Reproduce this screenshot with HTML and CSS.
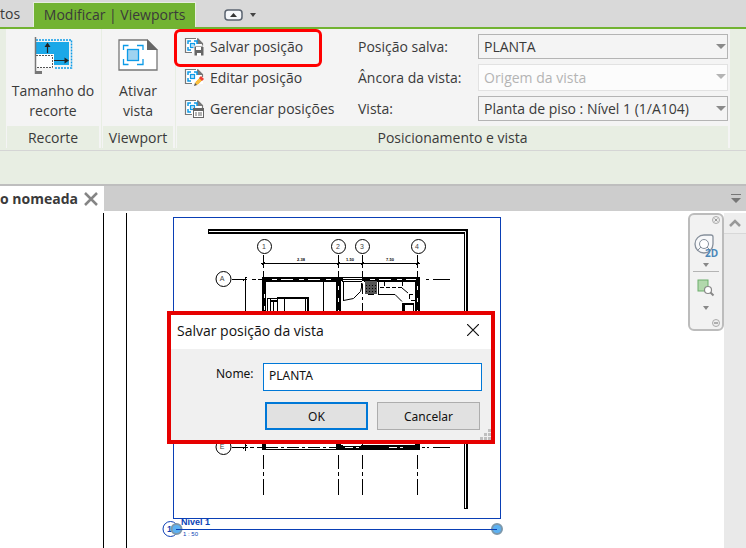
FILE: index.html
```html
<!DOCTYPE html>
<html lang="pt-BR">
<head>
    <meta charset="UTF-8">
    <meta name="viewport" content="width=device-width, initial-scale=1.0">
    <title>Modificar | Viewports</title>
    <link rel="stylesheet" href="styles.css">
</head>
<body>

<svg width="0" height="0" class="defs">
    <symbol id="view-page" viewBox="0 0 20 20">
        <path d="M1 1h13l5 5v10H1z" fill="#fff"/>
        <path d="M12 1.500H1.500v14H8M13.500 1.500L18.500 6.500V9" fill="none" stroke="#777" stroke-width="1.200"/>
        <path d="M13 1l6 6h-6z" fill="#777"/>
        <path d="M4 7V4h3M10 4h3v3M4 10v3h3" fill="none" stroke="#0d9be8" stroke-width="1.500"/>
        <rect x="6.500" y="6.500" width="4" height="4" fill="#bfe3f7" stroke="#0d9be8" stroke-width="1.200"/>
    </symbol>
</svg>

<header>
    <nav class="ribbon-tabs">
        <a href="#" class="tab">tos</a>
        <a href="#" class="tab active">Modificar | Viewports</a>
        <button class="collapse" aria-label="Minimizar">
            <svg width="32" height="12" viewBox="0 0 32 12">
                <rect x="1" y="1" width="17" height="10" rx="3" fill="#f5f7fa" stroke="#5b6470" stroke-width="1.500"/>
                <path d="M6 8l3.500-4 3.500 4z" fill="#333"/>
                <path d="M26 4h6l-3 4z" fill="#444"/>
            </svg>
        </button>
    </nav>
</header>

<section class="ribbon">
    <div class="panel crop">
        <button class="big">
            <svg width="40" height="40" viewBox="0 0 40 40">
                <rect x="3" y="5" width="33" height="23" fill="#1ba8e8"/>
                <path d="M3 3h35.500v28H21" fill="none" stroke="#0d9be8" stroke-width="1.500" stroke-dasharray="2 1"/>
                <path d="M3 17h18v14H3z" fill="#fff"/>
                <path d="M3 18.500h16.500v12H3" fill="none" stroke="#555" stroke-dasharray="2 1"/>
                <path d="M2.500 0v37" stroke="#777" stroke-width="1.500"/>
                <path d="M2 34h7v3H2z" fill="#777"/>
                <path d="M14.500 16V8M21 23.500h12" stroke="#222" stroke-width="1.200"/>
                <path d="M11.500 10l3-4.500 3 4.500zM31.500 20.500l4.500 3-4.500 3z" fill="#222"/>
            </svg>
            <span>Tamanho do<br>recorte</span>
        </button>
        <h2>Recorte</h2>
    </div>

    <div class="panel view">
        <button class="big">
            <svg width="40" height="40" viewBox="0 0 40 40">
                <path d="M1 3h28l10 10v20H1z" fill="#fff" stroke="#777" stroke-width="1.300"/>
                <path d="M29 2v11h11z" fill="#666"/>
                <path d="M5.500 13V8.500h5M19 8.500h6V13M5.500 22v5.500h5M19 27.500h6V22" fill="none" stroke="#0d9be8" stroke-width="1.300"/>
                <rect x="9.500" y="12.500" width="11" height="11" fill="#9fd3f0" stroke="#0d9be8" stroke-width="1.300"/>
            </svg>
            <span>Ativar<br>vista</span>
        </button>
        <h2>Viewport</h2>
    </div>

    <div class="panel position">
        <div class="position-body">
            <div class="commands">
                <button class="command marked">
                    <svg width="20" height="20" viewBox="0 0 20 20">
                        <use href="#view-page"/>
                        <path d="M10 9h9l1 1v9H10z" fill="#666" stroke="#f4f4f4" stroke-width="1"/>
                        <path d="M12 10h5v3h-5zM13 16h4v3h-4z" fill="#fff"/>
                    </svg>
                    Salvar posição
                </button>
                <button class="command">
                    <svg width="20" height="20" viewBox="0 0 20 20">
                        <use href="#view-page"/>
                        <path d="M10 18l1-4 5-5 3 3-5 5z" fill="#fbbf3c" stroke="#f4f4f4" stroke-width="1"/>
                        <path d="M15 10l2-2 3 3-2 2z" fill="#ee4035"/>
                        <path d="M10 18l1-3 2 2z" fill="#555"/>
                    </svg>
                    Editar posição
                </button>
                <button class="command">
                    <svg width="20" height="20" viewBox="0 0 20 20">
                        <use href="#view-page"/>
                        <rect x="9" y="9" width="11" height="10" fill="#666"/>
                        <path d="M10 12h9v6h-9z" fill="#fff"/>
                        <path d="M11 14h2M14 14h4M11 16h2M14 16h4" stroke="#666"/>
                    </svg>
                    Gerenciar posições
                </button>
            </div>
            <div class="fields">
                <label for="saved">Posição salva:</label>
                <div class="combo"><select id="saved"><option>PLANTA</option></select></div>
                <label for="anchor">Âncora da vista:</label>
                <div class="combo off"><select id="anchor" disabled><option>Origem da vista</option></select></div>
                <label for="sheet-view">Vista:</label>
                <div class="combo"><select id="sheet-view"><option>Planta de piso : Nível 1 (1/A104)</option></select></div>
            </div>
        </div>
        <h2>Posicionamento e vista</h2>
    </div>
</section>

<div class="options-bar"></div>

<div class="view-tabs">
    <div class="view-tab">
        <a href="#">o nomeada</a>
        <button aria-label="Fechar vista">
            <svg width="14" height="14" viewBox="0 0 14 14"><path d="M1 1l12 12M13 1L1 13" stroke="#858585" stroke-width="2.500"/></svg>
        </button>
    </div>
    <button class="tab-list" aria-label="Lista de vistas">
        <svg width="10" height="9" viewBox="0 0 10 9"><path d="M0 0h10v1H0zM0 4h10L5 9z" fill="#777"/></svg>
    </button>
</div>

<main>
    <div class="canvas">
        <svg class="drawing" width="688" height="337" viewBox="0 211 688 337">
            <!-- sheet border -->
            <path d="M103.500 213V2000M126.500 213V2000" stroke="#000"/>

            <!-- viewport frame and title -->
            <rect x="173.500" y="217.500" width="327" height="301" class="blue"/>
            <circle cx="170.500" cy="529" r="7.500" class="blue"/>
            <text x="167" y="532" class="title">1</text>
            <circle cx="176.500" cy="529" r="5" class="grip-dot"/>
            <circle cx="497" cy="529" r="5" class="grip-dot"/>
            <path d="M176 529.500h321" class="blue"/>
            <text x="181" y="525" class="title">Nível 1</text>
            <text x="183" y="536" class="scale">1 : 50</text>

            <!-- outer wall -->
            <path d="M208 229h260v280h-4V234H208z" fill="#000"/>
            <path d="M209 231.500h256.500V508" fill="none" stroke="#fff"/>

            <!-- grid bubbles -->
            <g class="bubble">
                <circle cx="264.500" cy="246.500" r="7"/>
                <circle cx="338.500" cy="246.500" r="7"/>
                <circle cx="362.500" cy="246.500" r="7"/>
                <circle cx="418.500" cy="246.500" r="7"/>
                <circle cx="223.500" cy="279" r="7.500"/>
                <circle cx="223.500" cy="447" r="7.500"/>
            </g>
            <g class="mark">
                <text x="264" y="249">1</text>
                <text x="338" y="249">2</text>
                <text x="362" y="249">3</text>
                <text x="417" y="249">4</text>
                <text x="222" y="281">A</text>
                <text x="222" y="449">E</text>
            </g>

            <!-- grid lines and dimensions -->
            <g class="thin" shape-rendering="crispEdges">
                <path d="M263.500 255v13M338.500 255v13M362.500 255v13M417.500 255v13M263.500 271v6M338.500 271v6M362.500 271v6M417.500 271v6"/>
                <path d="M261 263.500h159M262 265l3-3M337 265l3-3M361 265l3-3M416 265l3-3"/>
                <path d="M232 279.500h15M252 279.500h4M258 279.500h4M426 279.500h3M433 279.500h17"/>
                <path d="M245.500 277v174M243 281l4-4M243 449l4-4"/>
                <path d="M232 447.500h16M250 447.500h4M257 447.500h5M422 447.500h3M427 447.500h2M433 447.500h17"/>
                <path d="M263.500 455v14M338.500 455v14M362.500 455v14M417.500 455v14"/>
                <path d="M263.500 472v4M338.500 472v4M362.500 472v4M417.500 472v4"/>
                <path d="M263.500 479v16M338.500 479v16M362.500 479v16M417.500 479v16"/>
                <path d="M362.500 284v166" stroke-dasharray="10 3 3 3"/>
            </g>
            <g class="dim">
                <text x="301" y="261">2.38</text>
                <text x="350" y="261">1.50</text>
                <text x="390" y="261">7.50</text>
            </g>

            <!-- rooms -->
            <g shape-rendering="crispEdges">
                <path d="M262 277h158v173h-5V282h-51v-1h-23v169h-5V282h-70v168h-4z" fill="#000"/>
                <path d="M343 278h19v4h-19z" fill="#fff"/>
                <path d="M342 279.500h20M342 281.500h20M323.500 282v60M343.500 282v19M361.500 283v5" class="thin"/>
                <path d="M272 279.500h62M370 279.500h46" stroke="#fff" stroke-dasharray="5 4 12 6"/>
                <path d="M338.500 286v150M417.500 286v150M264.500 294v150" stroke="#fff" stroke-dasharray="4 8"/>
                <path d="M277 297h32v18h-2v-16h-30z" fill="#000"/>
                <path d="M267.500 298.500h10M267.500 298v20M270.500 299v16M273.500 301v14M277.500 298v17M284.500 299v16M305.500 299v16" class="thin"/>
                <path d="M271 300h6v2h-6z" fill="#000"/>
                <rect x="365" y="281" width="12" height="13" fill="#555"/>
                <path d="M366 285.500h10M366 288.500h10M366 291.500h10" stroke="#000" stroke-dasharray="1 2"/>
                <path d="M368 294.500h6M378.500 282v12M402 303h11v12M404.500 303v12" class="thin"/>
                <path d="M402 303h11v2h-11zM402 303h2v12h-2z" fill="#000"/>
                <path d="M384.500 282v5M380 287.500h22M402.500 282v6M409.500 295v5h6M409 294.500h6" class="thin" stroke-dasharray="4 2"/>
            </g>
            <path d="M343.500 300.500l10-2 7-7 2-8M378 294.500h17l7 7M402 288l6 5" class="thin"/>

            <!-- bottom wall -->
            <g shape-rendering="crispEdges">
                <path d="M262 445h158v5H262z" fill="#000"/>
                <path d="M266 445h70v4h-70zM343 445h18v1h-18z" fill="#fff"/>
                <path d="M266 447.500h70" class="thin" stroke-dasharray="12 3 3 3"/>
                <path d="M345 447.500h70" stroke="#fff" stroke-dasharray="8 3 3 30"/>
            </g>
        </svg>

        <form class="dialog">
            <div class="dialog-title">
                <h1>Salvar posição da vista</h1>
                <button type="button" aria-label="Fechar">
                    <svg width="12" height="12" viewBox="0 0 12 12"><path d="M0 0l12 12M12 0L0 12" stroke="#111" stroke-width="1.200"/></svg>
                </button>
            </div>
            <div class="dialog-body">
                <div class="name-row">
                    <label for="name">Nome:</label>
                    <input type="text" id="name" value="PLANTA">
                </div>
                <div class="actions">
                    <button type="button" class="default">OK</button>
                    <button type="button">Cancelar</button>
                </div>
                <svg class="grip" width="11" height="11" viewBox="0 0 11 11">
                    <path d="M8 0h3v3H8zM4 4h3v3H4zM8 4h3v3H8zM0 8h3v3H0zM4 8h3v3H4zM8 8h3v3H8z" fill="#bfbfbf"/>
                </svg>
            </div>
        </form>
    </div>

    <aside class="navbar">
        <button aria-label="Fechar barra">
            <svg width="8" height="8" viewBox="0 0 8 8"><circle cx="4" cy="4" r="3.500" fill="#eee" stroke="#aaa"/><path d="M2.500 2.500l3 3M5.500 2.500l-3 3" stroke="#999"/></svg>
        </button>
        <button class="wheel" aria-label="Roda de navegação 2D">
            <svg width="26" height="26" viewBox="0 0 26 26">
                <path d="M11 2h7q2 0 2 2v7a9 9 0 1 1-9-9z" fill="#f7f8fa" stroke="#87909c" stroke-width="1.300"/>
                <circle cx="11" cy="11" r="4.500" fill="#fff" stroke="#87909c"/>
                <path d="M4 18l4-4M14 14l3 3" stroke="#87909c"/>
                <text x="12" y="24">2D</text>
            </svg>
        </button>
        <button aria-label="Opções da roda"><svg width="6" height="4" viewBox="0 0 6 4"><path d="M0 0h6L3 4z" fill="#888"/></svg></button>
        <hr>
        <button class="zoom" aria-label="Zoom na região">
            <svg width="18" height="18" viewBox="0 0 18 18">
                <rect x="1" y="1" width="10" height="11" fill="#b2d8ac" stroke="#6cae6c"/>
                <circle cx="11" cy="11" r="3.500" fill="#fff" stroke="#888" stroke-width="1.200"/>
                <path d="M13.500 13.500l3 3" stroke="#888" stroke-width="2"/>
            </svg>
        </button>
        <button aria-label="Opções de zoom"><svg width="6" height="4" viewBox="0 0 6 4"><path d="M0 0h6L3 4z" fill="#888"/></svg></button>
        <button class="more" aria-label="Personalizar">
            <svg width="8" height="8" viewBox="0 0 8 8"><circle cx="4" cy="4" r="3.500" fill="#eee" stroke="#aaa"/><path d="M2 4h4" stroke="#999" stroke-width="1.500"/></svg>
        </button>
    </aside>

    <div class="scrollbar">
        <button aria-label="Rolar para cima">
            <svg width="12" height="8" viewBox="0 0 12 8"><path d="M1 7l5-5 5 5" fill="none" stroke="#999" stroke-width="2.500"/></svg>
        </button>
    </div>
</main>

</body>
</html>
```
FILE: styles.css
```css
/* Global Styles */
*, *::before, *::after {
    box-sizing: border-box;
    margin: 0;
    padding: 0;
}
body {
    display: flex;
    flex-direction: column;
    min-height: 100vh;
    background-color: #fff;
    color: #3a3a3a;
    font-family: 'Open Sans', 'Noto Sans', sans-serif;
    font-size: 14px;
    overflow: hidden;
}
a {
    color: inherit;
    text-decoration: none;
}
button {
    border: none;
    background: none;
    color: inherit;
    font: inherit;
}
svg {
    display: block;
    flex: none;
}
.defs {
    position: absolute;
}

/* Ribbon tabs */
.ribbon-tabs {
    display: flex;
    align-items: flex-end;
    height: 29px;
    background-color: #d9d9d9;
    border-bottom: 2px solid #72b332;
}
.tab {
    height: 25px;
    line-height: 24px;
}
.tab.active {
    width: 163px;
    margin-left: 13px;
    border: 1px solid #e6eedf;
    border-bottom: none;
    background-color: #72b332;
    text-align: center;
}
.collapse {
    margin-left: 28px;
    padding-bottom: 6px;
}

/* Ribbon */
.ribbon {
    display: flex;
    height: 121px;
    padding: 0 16px 2px 6px;
    background-color: #e8eee3;
}
.panel {
    display: flex;
    flex-direction: column;
    padding: 0 2px 0 1px;
    background-color: #f4f4f4;
    border-right: 1px solid #e8eee3;
}
.crop {
    width: 96px;
}
.view {
    width: 74px;
}
.position {
    flex: 1;
    border-right: none;
}
.panel h2 {
    height: 22px;
    margin-top: auto;
    background-color: #e8eee3;
    font-size: 14px;
    font-weight: 400;
    line-height: 24px;
    text-align: center;
}
.big {
    display: flex;
    flex-direction: column;
    align-items: center;
    gap: 4px;
    padding-top: 8px;
    line-height: 20px;
    white-space: nowrap;
}
.position-body {
    display: flex;
    padding: 2px 0;
}
.commands {
    width: 181px;
    padding-left: 7px;
}
.command {
    display: flex;
    align-items: center;
    gap: 6px;
    height: 31px;
    white-space: nowrap;
}
.marked {
    position: relative;
}
.marked::after {
    content: "";
    position: absolute;
    top: -2px;
    left: -10px;
    width: 148px;
    height: 38px;
    border: 3px solid #f00;
    border-radius: 6px;
}
.fields {
    display: grid;
    flex: 1;
    grid-template-columns: 120px 1fr;
    grid-auto-rows: 31px;
    align-items: center;
}
.combo {
    position: relative;
}
.combo::after {
    content: "";
    position: absolute;
    top: 10px;
    right: 2px;
    border: 5px solid transparent;
    border-top-color: #8a8a8a;
    border-bottom: none;
    pointer-events: none;
}
select {
    display: block;
    width: 100%;
    height: 25px;
    padding-left: 5px;
    appearance: none;
    border: 1px solid #b4b4b4;
    border-radius: 0;
    background-color: #f4f4f4;
    color: #3a3a3a;
    font: inherit;
}
.off select {
    height: 27px;
    border-color: #e2e2e2;
    background-color: #fcfcfc;
    color: #b4b4b4;
    opacity: 1;
}
.off::after {
    border-top-color: #b4b4b4;
}
.options-bar {
    height: 36px;
    border-top: 1px solid #d5d5d5;
    border-bottom: 2px solid #bebebe;
    background-color: #e8eee3;
}

/* View tabs */
.view-tabs {
    display: flex;
    align-items: center;
    justify-content: space-between;
    height: 25px;
    padding-right: 5px;
    background-color: #cdcdcd;
}
.view-tab {
    display: flex;
    align-items: center;
    justify-content: space-between;
    width: 104px;
    height: 25px;
    padding-right: 6px;
    background-color: #fff;
    font-weight: 700;
}

/* Drawing area */
main {
    display: flex;
    flex: 1;
    border-top: 1px solid #fff;
}
.canvas {
    position: relative;
    flex: 1;
    min-width: 0;
    margin-top: -1px;
}
.drawing {
    overflow: visible;
}
.blue {
    fill: none;
    stroke: #0a3fb5;
}
.title {
    fill: #0a3fb5;
    font: bold 9px 'Liberation Sans', sans-serif;
}
.scale {
    fill: #0a3fb5;
    font: 6px 'Liberation Sans', sans-serif;
}
.grip-dot {
    fill: #5cb1f2;
    stroke: #7d98ab;
    stroke-width: 2;
}
.bubble circle {
    fill: #fff;
    stroke: #000;
}
.mark text {
    fill: #444;
    font: 7px 'Liberation Sans', sans-serif;
    text-anchor: middle;
}
.dim text {
    font: bold 4px 'Liberation Sans', sans-serif;
    text-anchor: middle;
}
.thin {
    fill: none;
    stroke: #000;
}

/* Dialog */
.dialog {
    position: absolute;
    top: 100px;
    left: 167px;
    width: 328px;
    border: 4px solid #e60000;
    background-color: #f0f0f0;
    color: #111;
    font-family: 'Noto Sans', sans-serif;
    font-size: 12px;
}
.dialog-title {
    display: flex;
    align-items: center;
    justify-content: space-between;
    height: 34px;
    padding: 0 12px 4px 6px;
    background-color: #fff;
}
.dialog-title h1 {
    font-family: 'Open Sans', sans-serif;
    font-size: 14px;
    font-weight: 400;
}
.dialog-body {
    position: relative;
    padding: 14px 9px 10px 45px;
}
.name-row {
    display: flex;
    justify-content: space-between;
}
.name-row label {
    line-height: 21px;
}
.name-row input {
    width: 219px;
    height: 28px;
    padding: 0 5px 4px;
    border: 1px solid #0078d7;
    background-color: #fff;
    color: #111;
    font: inherit;
    outline: none;
}
.actions {
    display: flex;
    justify-content: flex-end;
    gap: 9px;
    padding: 11px 2px 0 0;
}
.actions button {
    width: 103px;
    height: 28px;
    border: 1px solid #adadad;
    background-color: #e1e1e1;
}
.actions .default {
    border: 2px solid #0078d7;
}
.grip {
    position: absolute;
    right: 0;
    bottom: 0;
}

/* Navigation bar */
.navbar {
    display: flex;
    flex-direction: column;
    align-items: center;
    align-self: flex-start;
    width: 36px;
    height: 118px;
    margin-top: 1px;
    padding: 1px 0 2px;
    border: 2px solid #bcbcbc;
    border-radius: 6px;
    background-color: #f2f2f2;
}
.navbar > :first-child {
    align-self: flex-end;
    margin-right: 2px;
}
.wheel {
    margin: 9px 0 4px;
}
.wheel text {
    fill: #4a86b8;
    font: bold 10px 'Open Sans', sans-serif;
}
.navbar hr {
    width: 26px;
    margin: 4px 0 7px;
    border: none;
    border-top: 1px solid #b4b4b4;
}
.zoom {
    margin-bottom: 9px;
}
.more {
    align-self: flex-end;
    margin: auto 2px 0 0;
}

/* Scrollbar */
.scrollbar {
    width: 22px;
    margin-top: 1px;
    background-color: #e9e9e9;
}
.scrollbar button {
    display: flex;
    align-items: center;
    justify-content: center;
    width: 100%;
    height: 21px;
    border-bottom: 1px solid #d8d8d8;
    background-color: #eee;
}
```
